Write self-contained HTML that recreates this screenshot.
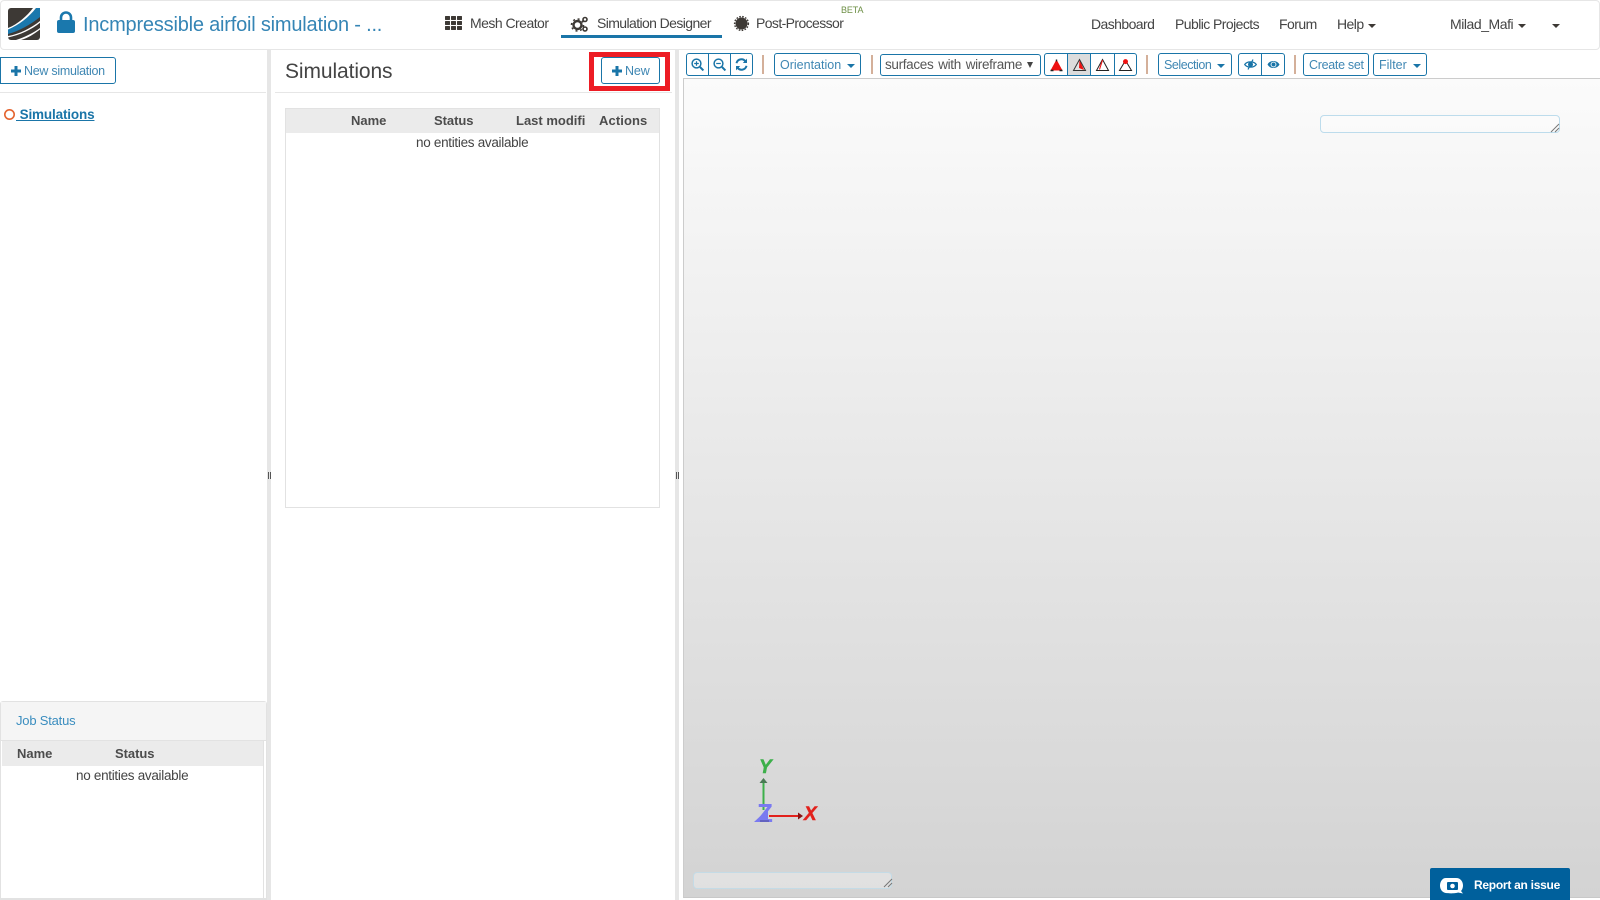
<!DOCTYPE html>
<html><head><meta charset="utf-8"><title>Simulation Designer</title>
<style>
html,body{margin:0;padding:0;background:#fff;width:1600px;height:900px;overflow:hidden}
body{position:relative;font-family:"Liberation Sans",sans-serif;color:#444}
.a,.t,.b{position:absolute;box-sizing:border-box}
.t{white-space:nowrap;line-height:20px}
.b{border:1px solid #1a75a8;border-radius:3px;background:#fff;color:#3f87b3;font-size:12.5px;line-height:20px;white-space:nowrap}
.n{font-size:14px;color:#444}
.h{font-size:13px;font-weight:bold;color:#4c4c4c}
.c{width:0;height:0;border-left:4px solid transparent;border-right:4px solid transparent;position:absolute}
.sep{position:absolute;width:2px;height:19px;top:55px;background:#d4b09a}
.d{position:absolute;top:0;bottom:0;width:1px;background:#1a75a8}
svg{position:absolute;overflow:visible}
</style></head><body>

<!-- header -->
<div class="a" style="left:0;top:0;width:1600px;height:50px;border:1px solid #e6e6e6;border-radius:4px;background:#fff"></div>
<svg style="left:8px;top:8px" width="32" height="32" viewBox="0 0 32 32">
<rect width="32" height="32" rx="3" fill="#3d3935"/>
<path d="M0 21C11 17 21 9 28 0H32V9C22 17 11 23 0 26Z" fill="#1a78ad"/>
<path d="M0 20C10 16 19 8 25 0H28C21 9 11 17 0 21.500Z" fill="#fff"/>
<path d="M0 28C12 26 23 20 32 13V14.800C23 22 12 27 0 29.500Z" fill="#fff"/>
<path d="M8 32C17 29 25 25 32 20V21.500C26 26 20 30 13 32Z" fill="#fff"/>
</svg>
<svg style="left:57px;top:11px" width="18" height="22" viewBox="0 0 18 22">
<path d="M4 10V6.500a5 5 0 0 1 10 0V10" fill="none" stroke="#1a78ad" stroke-width="2.600"/>
<rect y="9" width="18" height="13" rx="2" fill="#1a78ad"/>
</svg>
<div class="t" style="left:83px;top:15px;font-size:20px;color:#3585b5;letter-spacing:-.2px">Incmpressible airfoil simulation - ...</div>

<svg style="left:445px;top:16px" width="17" height="14" fill="#3d3935">
<rect width="5" height="4" rx=".6"/><rect x="6" width="5" height="4" rx=".6"/><rect x="12" width="5" height="4" rx=".6"/>
<rect y="5" width="5" height="4" rx=".6"/><rect x="6" y="5" width="5" height="4" rx=".6"/><rect x="12" y="5" width="5" height="4" rx=".6"/>
<rect y="10" width="5" height="4" rx=".6"/><rect x="6" y="10" width="5" height="4" rx=".6"/><rect x="12" y="10" width="5" height="4" rx=".6"/>
</svg>
<div class="t n" style="left:470px;top:13px;letter-spacing:-.53px">Mesh Creator</div>
<svg style="left:571px;top:16px" width="18" height="16" viewBox="0 0 18 16">
<circle cx="6.500" cy="9" r="4" fill="none" stroke="#3d3935" stroke-width="2.400"/>
<circle cx="6.500" cy="9" r="6" fill="none" stroke="#3d3935" stroke-width="1.600" stroke-dasharray="2 2.700"/>
<circle cx="14" cy="3.500" r="2" fill="none" stroke="#3d3935" stroke-width="1.600"/>
<circle cx="14" cy="13" r="2" fill="none" stroke="#3d3935" stroke-width="1.600"/>
</svg>
<div class="t n" style="left:597px;top:13px;letter-spacing:-.6px">Simulation Designer</div>
<div class="a" style="left:561px;top:35px;width:161px;height:3px;background:#1a75a8"></div>
<svg style="left:734px;top:16px" width="15" height="15" viewBox="0 0 15 15">
<circle cx="7.500" cy="7.500" r="6" fill="#3d3935"/>
<circle cx="7.500" cy="7.500" r="6.900" fill="none" stroke="#3d3935" stroke-width="1.400" stroke-dasharray="1.600 1.400"/>
</svg>
<div class="t n" style="left:756px;top:13px;letter-spacing:-.6px">Post-Processor</div>
<div class="t" style="left:841px;top:0;font-size:9px;color:#6d8f45;letter-spacing:-.1px">BETA</div>

<div class="t n" style="left:1091px;top:14px;letter-spacing:-.58px">Dashboard</div>
<div class="t n" style="left:1175px;top:14px;letter-spacing:-.57px">Public Projects</div>
<div class="t n" style="left:1279px;top:14px;letter-spacing:-.55px">Forum</div>
<div class="t n" style="left:1337px;top:14px;letter-spacing:-.55px">Help</div>
<div class="c" style="left:1368px;top:24px;border-top:4px solid #3d3935"></div>
<div class="t n" style="left:1450px;top:14px;letter-spacing:-.45px">Milad_Mafi</div>
<div class="c" style="left:1518px;top:24px;border-top:4px solid #3d3935"></div>
<div class="c" style="left:1552px;top:24px;border-top:4px solid #3d3935"></div>

<!-- left sidebar -->
<div class="b" style="left:0;top:57px;width:116px;height:27px;border-radius:0 3px 3px 0;padding:3px 0 0 23px;letter-spacing:-.28px">New simulation</div>
<svg style="left:11px;top:66px" width="10" height="10" fill="#1a75a8"><rect x="3.500" width="3" height="10"/><rect y="3.500" width="10" height="3"/></svg>
<div class="a" style="left:0;top:92px;width:266px;height:1px;background:#e6e6e6"></div>
<svg style="left:4px;top:109px" width="12" height="12"><circle cx="5.500" cy="5.500" r="4.700" fill="none" stroke="#e4632e" stroke-width="1.600"/></svg>
<div class="t" style="left:16px;top:105px;font-size:13.5px;font-weight:bold;color:#1a75a8;text-decoration:underline;white-space:pre;letter-spacing:-.15px"> Simulations</div>

<div class="a" style="left:0;top:701px;width:267px;height:199px;border:1px solid #e2e2e2;border-radius:3px 3px 0 0;background:#fff"></div>
<div class="a" style="left:1px;top:702px;width:265px;height:39px;background:#f5f5f5;border-bottom:1px solid #e2e2e2"></div>
<div class="t" style="left:16px;top:711px;font-size:13px;color:#3a8dbf;letter-spacing:-.2px">Job Status</div>
<div class="a" style="left:2px;top:741px;width:261px;height:25px;background:#ebebeb"></div>
<div class="a" style="left:263px;top:741px;width:1px;height:157px;background:#e2e2e2"></div>
<div class="t h" style="left:17px;top:744px">Name</div>
<div class="t h" style="left:115px;top:744px;letter-spacing:-.05px">Status</div>
<div class="t" style="left:76px;top:766px;font-size:13.5px;color:#444;letter-spacing:-.3px">no entities available</div>
<div class="a" style="left:1px;top:898px;width:265px;height:2px;background:#e2e2e2"></div>

<!-- splitters -->
<div class="a" style="left:267px;top:50px;width:4px;height:850px;background:#e6e6e6"></div>
<div class="a" style="left:268px;top:472px;width:1px;height:7px;background:#555"></div>
<div class="a" style="left:270px;top:472px;width:1px;height:7px;background:#555"></div>
<div class="a" style="left:675px;top:50px;width:4px;height:850px;background:#e6e6e6"></div>
<div class="a" style="left:676px;top:472px;width:1px;height:7px;background:#555"></div>
<div class="a" style="left:678px;top:472px;width:1px;height:7px;background:#555"></div>

<!-- middle panel -->
<div class="t" style="left:285px;top:61.500px;font-size:21px;color:#444;letter-spacing:-.1px">Simulations</div>
<div class="a" style="left:275px;top:92px;width:397px;height:1px;background:#e6e6e6"></div>
<div class="b" style="left:601px;top:57px;width:59px;height:27px;padding:3px 0 0 23px;letter-spacing:-.1px">New</div>
<svg style="left:612px;top:66px" width="10" height="10" fill="#1a75a8"><rect x="3.500" width="3" height="10"/><rect y="3.500" width="10" height="3"/></svg>
<div class="a" style="left:589px;top:52px;width:81px;height:39px;border:5px solid #ed1c24"></div>

<div class="a" style="left:285px;top:108px;width:375px;height:400px;border:1px solid #e2e2e2"></div>
<div class="a" style="left:286px;top:109px;width:373px;height:24px;background:#ebebeb"></div>
<div class="t h" style="left:351px;top:111px">Name</div>
<div class="t h" style="left:434px;top:111px;letter-spacing:-.05px">Status</div>
<div class="t h" style="left:516px;top:111px;width:69px;overflow:hidden">Last modified</div>
<div class="t h" style="left:599px;top:111px;letter-spacing:.1px">Actions</div>
<div class="t" style="left:416px;top:133px;font-size:13.5px;color:#444;letter-spacing:-.3px">no entities available</div>

<!-- toolbar -->
<div class="b" style="left:686px;top:53px;width:67px;height:23px">
  <div class="d" style="left:21px"></div><div class="d" style="left:43px"></div>
  <svg style="left:4px;top:4px" width="13" height="13" viewBox="0 0 13 13" fill="none" stroke="#1a75a8"><circle cx="5.500" cy="5.500" r="4.400" stroke-width="1.500"/><path d="M9 9l3.400 3.400" stroke-width="2"/><path d="M3.200 5.500h4.600M5.500 3.200v4.600" stroke-width="1.200"/></svg>
  <svg style="left:26px;top:4px" width="13" height="13" viewBox="0 0 13 13" fill="none" stroke="#1a75a8"><circle cx="5.500" cy="5.500" r="4.400" stroke-width="1.500"/><path d="M9 9l3.400 3.400" stroke-width="2"/><path d="M3.200 5.500h4.600" stroke-width="1.200"/></svg>
  <svg style="left:48px;top:4px" width="13" height="13" viewBox="0 0 13 13" fill="none" stroke="#1a75a8" stroke-width="2"><path d="M1.500 5.200A5 5 0 0 1 10.500 3.500"/><path d="M11.500 7.800A5 5 0 0 1 2.500 9.500"/><path d="M12 .6V5H7.800z" fill="#1a75a8" stroke="none"/><path d="M1 12.400V8h4.200z" fill="#1a75a8" stroke="none"/></svg>
</div>
<div class="sep" style="left:762px"></div>
<div class="b" style="left:774px;top:53px;width:87px;height:23px;padding:1px 0 0 5px">Orientation</div>
<div class="c" style="left:847px;top:64px;border-top:4px solid #1a75a8"></div>
<div class="sep" style="left:871px"></div>
<div class="b" style="left:880px;top:54px;width:161px;height:22px;color:#555;font-size:13.5px;padding-left:4px;word-spacing:1.400px;letter-spacing:-.33px">surfaces with wireframe</div>
<div class="c" style="left:1027px;top:62px;border-top:6px solid #444;border-left-width:3.500px;border-right-width:3.500px"></div>
<div class="b" style="left:1044px;top:53px;width:93px;height:23px">
  <div class="a" style="left:22px;top:0;bottom:0;width:23px;background:#dcdcdc"></div>
  <div class="d" style="left:22px"></div><div class="d" style="left:45px"></div><div class="d" style="left:69px"></div>
  <svg style="left:5px;top:5px" width="13" height="13" viewBox="0 0 13 13"><path d="M6.500 .5L12.500 11.500H.5Z" fill="#ee1111"/><path d="M.5 11.500h3M12.500 11.500h-3M6.500 .5v2" stroke="#222" stroke-width="1.400"/></svg>
  <svg style="left:28px;top:5px" width="13" height="13" viewBox="0 0 13 13"><path d="M6.500 .5L12.500 11.500H.5Z" fill="#e3e3e3"/><path d="M6.500 .5L11 11L6 9Z" fill="#ee1111"/><path d="M6.500 .5L12.500 11.500H.5Z" fill="none" stroke="#333" stroke-width="1"/></svg>
  <svg style="left:51px;top:5px" width="13" height="13" viewBox="0 0 13 13"><path d="M6.500 .5L12.500 11.500H.5Z" fill="#fff" stroke="#222" stroke-width="1"/><path d="M6.500 1L3.500 10.500" stroke="#ee1111" stroke-width="1.100"/></svg>
  <svg style="left:74px;top:5px" width="13" height="13" viewBox="0 0 13 13"><path d="M6.500 1.500L12.500 11.500H.5Z" fill="#fff" stroke="#222" stroke-width="1"/><circle cx="6.500" cy="2.600" r="2.500" fill="#ee1111"/></svg>
</div>
<div class="sep" style="left:1146px"></div>
<div class="b" style="left:1158px;top:53px;width:74px;height:23px;padding:1px 0 0 5px;letter-spacing:-.45px">Selection</div>
<div class="c" style="left:1217px;top:64px;border-top:4px solid #1a75a8"></div>
<div class="b" style="left:1238px;top:53px;width:47px;height:23px">
  <div class="d" style="left:22px"></div>
  <svg style="left:5px;top:5px" width="13" height="11" viewBox="0 0 13 11" fill="none" stroke="#1a75a8"><path d="M.7 5.500C3 2 10 2 12.300 5.500C10 9 3 9 .7 5.500Z" stroke-width="1.200"/><circle cx="6.500" cy="5.500" r="2" fill="#1a75a8"/><path d="M9 .5L4 10.500" stroke-width="1.200"/></svg>
  <svg style="left:28px;top:5px" width="13" height="11" viewBox="0 0 13 11"><path d="M.5 5.500C3 .8 10 .8 12.500 5.500C10 10.200 3 10.200 .5 5.500Z" fill="#1a75a8"/><circle cx="6.500" cy="5.500" r="2.900" fill="#fff"/><circle cx="6.500" cy="5.500" r="2" fill="#1a75a8"/></svg>
</div>
<div class="sep" style="left:1294px"></div>
<div class="b" style="left:1303px;top:53px;width:66px;height:23px;padding:1px 0 0 5px;letter-spacing:-.3px">Create set</div>
<div class="b" style="left:1373px;top:53px;width:54px;height:23px;padding:1px 0 0 5px">Filter</div>
<div class="c" style="left:1413px;top:64px;border-top:4px solid #1a75a8"></div>

<!-- viewport -->
<div class="a" style="left:683px;top:78px;width:917px;height:820px;border-top:1px solid #ccc;border-left:1px solid #ccc;border-bottom:1px solid #c8c8c8;background:linear-gradient(#fbfbfb,#d3d3d3)"></div>
<div class="a" style="left:1320px;top:115px;width:240px;height:18px;border:1px solid #bddcec;border-radius:4px;background:rgba(255,255,255,.3)"></div>
<svg style="left:1551px;top:124px" width="8" height="8" stroke="#777" stroke-width="1"><path d="M0 8L8 0M4 8L8 4"/></svg>
<div class="a" style="left:693px;top:872px;width:199px;height:17px;border:1px solid #c4dbe6;border-radius:4px;background:rgba(255,255,255,.3)"></div>
<svg style="left:884px;top:879px" width="8" height="8" stroke="#777" stroke-width="1"><path d="M0 8L8 0M4 8L8 4"/></svg>

<svg style="left:745px;top:755px" width="80" height="70" viewBox="0 0 80 70">
<path d="M18.500 26V55" stroke="#3cb04a" stroke-width="2"/>
<path d="M18.500 23l-4 5h8z" fill="#4a7a55"/>
<path d="M24 61H54" stroke="#e2211c" stroke-width="2"/>
<path d="M58 61l-5-3.500v7z" fill="#8a1414"/>
<text x="14" y="18" font-family="Liberation Sans" font-size="19" font-weight="bold" font-style="italic" fill="#3cb04a" stroke="#3cb04a" stroke-width=".5">Y</text>
<path d="M9 67H23V54Z" fill="#7a7af0"/>
<text x="12" y="67" font-family="Liberation Sans" font-size="26" font-weight="bold" fill="#7a7af0">Z</text>
<path d="M15 66H24" stroke="#4a4a90" stroke-width="1"/>
<text x="59" y="65" font-family="Liberation Sans" font-size="19" font-weight="bold" font-style="italic" fill="#e2211c" stroke="#e2211c" stroke-width=".5">X</text>
</svg>

<div class="a" style="left:1430px;top:868px;width:140px;height:32px;background:#00609c;border-radius:2px 2px 0 0"></div>
<svg style="left:1440px;top:878px" width="24" height="16" viewBox="0 0 24 16">
<path d="M6 0H16C21 0 23 4 23 7.500C23 10 22 12 21 13L23 15.500L18 14.500C16 15.500 8 15.500 6 15C2 14.500 0 11 0 7.500C0 4 2 0 6 0Z" fill="#fff"/>
<rect x="7" y="4" width="11" height="8" rx="1" fill="#00609c"/><circle cx="12.500" cy="8" r="2.300" fill="#fff"/>
</svg>
<div class="t" style="left:1474px;top:875px;font-size:12px;font-weight:bold;color:#fff;letter-spacing:-.27px">Report an issue</div>

</body></html>
